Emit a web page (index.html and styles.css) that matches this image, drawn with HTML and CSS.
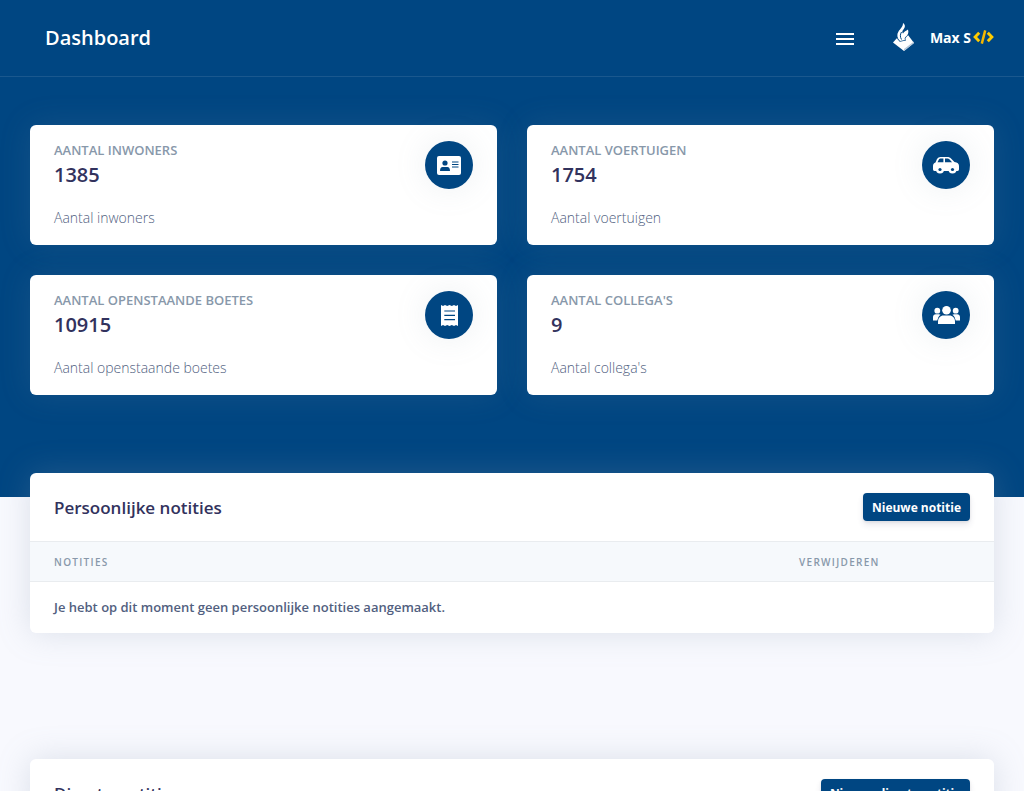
FILE: index.html
```html
<!DOCTYPE html>
<html lang="nl">
<head>
    <meta charset="UTF-8">
    <meta name="viewport" content="width=device-width, initial-scale=1.0">
    <title>Dashboard</title>
    <link rel="stylesheet" href="styles.css">
</head>
<body>
    <div class="hero">
        <header class="topbar">
            <h1 class="topbar-title">Dashboard</h1>
            <div class="topbar-right">
                <div class="hamburger"><span></span><span></span><span></span></div>
                <div class="user">
                    <svg class="user-logo" viewBox="0 0 23 28" width="23" height="28">
                        <path fill="#fff" d="M1 19.500l5-5.500 10-2 6 8-10 8z"/>
                        <path fill="#b4c6d8" d="M12 28l10-8v-1.500L12 26z"/>
                        <path fill="#fff" stroke="#004682" stroke-width="1.400" paint-order="stroke" d="M11 0c3 2 2 5 0 7-1 1.500-1 2.500 0 3.500 1-2 3-2.500 5-4 1 3 0 5.500-2.500 7.500-1 1-1 2-.5 3l-5 1c-3-3-3.500-6.500-1.500-9.500C8 6 11 4 11 0z"/>
                        <path fill="none" stroke="#004682" stroke-width="1" d="M9.500 9C8 11.500 8 14 9.500 16.500"/>
                    </svg>
                    <span class="user-name">Max S</span>
                    <svg class="user-code" viewBox="0 0 22 16" width="21" height="16">
                        <path fill="none" stroke="#ffcc00" stroke-width="3" d="M6.500 3.500L2.200 8l4.300 4.500M15.500 3.500L19.800 8l-4.300 4.500"/>
                        <path fill="none" stroke="#f5b800" stroke-width="2.600" d="M12.800 1L9.200 15"/>
                    </svg>
                </div>
            </div>
        </header>

        <div class="stats">
            <div class="stat-card">
                <div class="stat-text">
                    <h5 class="stat-label">Aantal inwoners</h5>
                    <span class="stat-value">1385</span>
                </div>
                <div class="stat-icon">
                    <svg viewBox="0 0 24 19" width="24" height="19">
                        <rect width="24" height="19" rx="2" fill="#fff"/>
                        <circle cx="8" cy="7" r="2.600" fill="#004682"/>
                        <path fill="#004682" d="M3 15c0-2.500 1-4 2.500-4h5c1.500 0 2.500 1.500 2.500 4z"/>
                        <path stroke="#004682" stroke-width="1" d="M15 6h6.500M15 8.500h6.500M15 11h6.500"/>
                    </svg>
                </div>
                <p class="stat-sub">Aantal inwoners</p>
            </div>
            <div class="stat-card">
                <div class="stat-text">
                    <h5 class="stat-label">Aantal voertuigen</h5>
                    <span class="stat-value">1754</span>
                </div>
                <div class="stat-icon">
                    <svg viewBox="0 0 26 17" width="26" height="17">
                        <path fill="#fff" d="M0 9c0-2 1-3 2.500-3.500L4 2C5 .7 6 0 7.500 0h7c1.500 0 2.500.5 3.500 1.500L21.500 5c3 .5 4.500 1.500 4.500 4v3c0 1-.5 2-1.500 2h-23C.5 14 0 13 0 12z"/>
                        <path fill="#004682" d="M4.500 5.200l1.500-2.900c.3-.5.800-.8 1.400-.8h3V5.200zM12 1.500h2.600c.6 0 1.100.2 1.500.6l3 3.100H12z"/>
                        <circle cx="7" cy="12.500" r="4" fill="#fff"/>
                        <circle cx="7" cy="12.500" r="1.600" fill="#004682"/>
                        <circle cx="19.500" cy="12.500" r="4" fill="#fff"/>
                        <circle cx="19.500" cy="12.500" r="1.600" fill="#004682"/>
                    </svg>
                </div>
                <p class="stat-sub">Aantal voertuigen</p>
            </div>
            <div class="stat-card">
                <div class="stat-text">
                    <h5 class="stat-label">Aantal openstaande boetes</h5>
                    <span class="stat-value">10915</span>
                </div>
                <div class="stat-icon">
                    <svg viewBox="0 0 17 21" width="17" height="21">
                        <path fill="#fff" d="M0 0l2 1 2-1 2.200 1L8.500 0l2.300 1L13 0l2 1 2-1v21l-2-1-2 1-2.200-1-2.300 1-2.300-1L4 21l-2-1-2 1z"/>
                        <path stroke="#004682" stroke-width="1.200" d="M3.300 6H14M3.300 10.300H14M3.300 14.700H14"/>
                    </svg>
                </div>
                <p class="stat-sub">Aantal openstaande boetes</p>
            </div>
            <div class="stat-card">
                <div class="stat-text">
                    <h5 class="stat-label">Aantal collega's</h5>
                    <span class="stat-value">9</span>
                </div>
                <div class="stat-icon">
                    <svg viewBox="0 0 27 18" width="27" height="18">
                        <g fill="#fff">
                            <circle cx="4.300" cy="4.700" r="2.900"/>
                            <circle cx="22.700" cy="4.700" r="2.900"/>
                            <path d="M0 14.500v-3.500c0-1.700 1.200-2.800 2.800-2.800h3c.7 0 1.300.2 1.800.6C5.800 10 4.800 12 4.500 14.500zM27 14.500v-3.500c0-1.700-1.200-2.800-2.800-2.800h-3c-.7 0-1.300.2-1.800.6 1.800 1.200 2.800 3.200 3.100 5.700z"/>
                            <circle cx="13.500" cy="4.300" r="4.300"/>
                            <path stroke="#004682" stroke-width="1" paint-order="stroke" d="M5 18v-2.500c0-3.500 2.500-6 5.500-6h6c3 0 5.500 2.500 5.500 6V18z"/>
                        </g>
                    </svg>
                </div>
                <p class="stat-sub">Aantal collega's</p>
            </div>
        </div>
    </div>

    <div class="content">
        <section class="panel">
            <div class="panel-head">
                <h3 class="panel-title">Persoonlijke notities</h3>
                <button class="btn">Nieuwe notitie</button>
            </div>
            <div class="table-head">
                <span class="col-notes">Notities</span>
                <span class="col-delete">Verwijderen</span>
            </div>
            <p class="empty-row">Je hebt op dit moment geen persoonlijke notities aangemaakt.</p>
        </section>

        <section class="panel">
            <div class="panel-head">
                <h3 class="panel-title">Directe notities</h3>
                <button class="btn btn-long">Nieuwe directe notitie</button>
            </div>
        </section>
    </div>
</body>
</html>
```

FILE: styles.css
```css
* {
    box-sizing: border-box;
}
html, body {
    height: 100%;
}
body {
    margin: 0;
    overflow: hidden;
    background-color: #f8f9fe;
    font-family: "Open Sans", sans-serif;
    color: #32325d;
}
.hero {
    height: 497px;
    background-color: #004682;
}
.topbar {
    height: 77px;
    padding: 0 30px 2px 45px;
    display: flex;
    align-items: center;
    justify-content: space-between;
    border-bottom: 1px solid rgba(255,255,255,0.1);
}
.topbar-title {
    margin: 0;
    font-size: 20px;
    font-weight: 600;
    color: white;
}
.topbar-right {
    display: flex;
    align-items: center;
}
.hamburger {
    width: 18px;
    margin-right: 38px;
}
.hamburger span {
    display: block;
    height: 2px;
    background-color: white;
    margin-top: 3px;
}
.user {
    display: flex;
    align-items: center;
}
.user-logo {
    margin-right: 15px;
}
.user-name {
    font-size: 14px;
    font-weight: 700;
    color: white;
    margin-right: 2px;
}
.stats {
    padding: 48px 30px 0;
    display: grid;
    grid-template-columns: 1fr 1fr;
    gap: 30px;
}
.stat-card {
    height: 120px;
    padding: 16px 24px;
    background-color: white;
    border-radius: 6px;
    box-shadow: 0 0 32px 0 rgba(136,152,170,0.15);
    display: grid;
    grid-template-columns: 1fr 48px;
    grid-template-rows: 48px auto;
}
.stat-label {
    margin: 2px 0 0;
    font-size: 13px;
    line-height: 15px;
    font-weight: 600;
    text-transform: uppercase;
    color: #8898aa;
}
.stat-value {
    display: block;
    margin-top: 5px;
    font-size: 20px;
    line-height: 24px;
    font-weight: 550;
    color: #32325d;
}
.stat-icon {
    width: 48px;
    height: 48px;
    border-radius: 50%;
    background-color: #004682;
    box-shadow: 0 0 32px 0 rgba(136,152,170,0.15);
    display: flex;
    align-items: center;
    justify-content: center;
}
.stat-sub {
    grid-column: 1 / 3;
    margin: 18px 0 0;
    font-size: 14px;
    line-height: 21px;
    font-weight: 300;
    color: #525f7f;
}
.content {
    padding: 0 30px;
    margin-top: -24px;
}
.panel {
    background-color: white;
    border-radius: 6px;
    box-shadow: 0 0 32px 0 rgba(136,152,170,0.25);
    margin-bottom: 126px;
}
.panel-head {
    height: 69px;
    padding: 20px 24px;
    display: flex;
    align-items: center;
    justify-content: space-between;
    border-bottom: 1px solid #e9ecef;
}
.panel-title {
    margin: 0;
    font-size: 17px;
    font-weight: 550;
    color: #32325d;
}
.panel + .panel .panel-title {
    padding-top: 2px;
}
.btn {
    height: 28px;
    padding: 0 9px;
    border: none;
    border-radius: 4px;
    background-color: #004682;
    color: white;
    font-family: "Open Sans", sans-serif;
    font-size: 12px;
    font-weight: 700;
    box-shadow: 0 4px 6px rgba(50,50,93,0.11), 0 1px 3px rgba(0,0,0,0.08);
}
.btn-long {
    padding-top: 2px;
    letter-spacing: -0.15px;
}
.table-head {
    height: 40px;
    padding: 0 24px;
    display: flex;
    align-items: center;
    background-color: #f6f9fc;
    border-bottom: 1px solid #e9ecef;
    font-size: 10px;
    font-weight: 600;
    letter-spacing: 1.300px;
    text-transform: uppercase;
    color: #8898aa;
}
.col-notes {
    width: 745px;
}
.empty-row {
    margin: 0;
    padding: 16px 24px 15px;
    font-size: 13px;
    line-height: 19.500px;
    font-weight: 600;
    color: #525f7f;
}
```
